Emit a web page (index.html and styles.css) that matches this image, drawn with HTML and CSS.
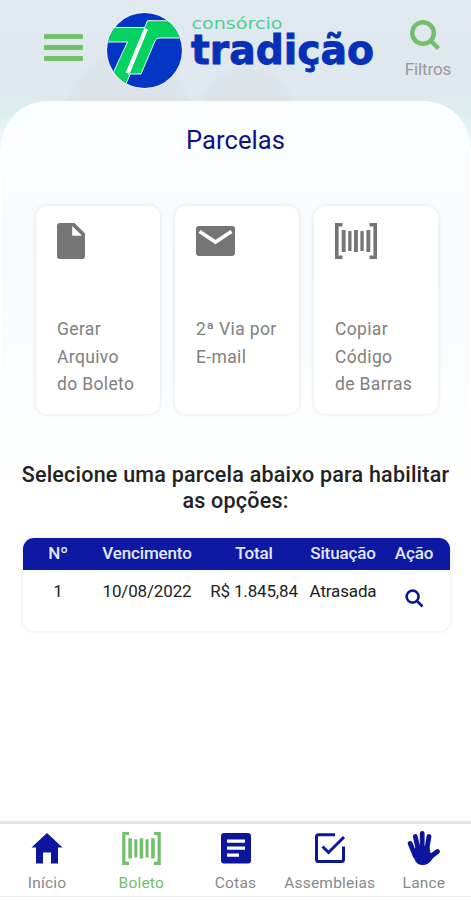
FILE: index.html
```
<!DOCTYPE html>
<html lang="pt-BR">
<head>
  <meta charset="UTF-8">
  <meta name="viewport" content="width=device-width, initial-scale=1.0">
  <title>Parcelas</title>
  <link rel="stylesheet" href="styles.css">
</head>
<body>
  <svg width="0" height="0" class="defs">
    <symbol id="barcode" viewBox="0 0 42 36">
      <path d="M0 0h7.5v3.4H3.6v29.2h3.9V36H0zM42 0h-7.5v3.4h3.9v29.2h-3.9V36H42z"/>
      <path d="M6.7 7h3.9v22H6.7zM13.2 8h3.300v20h-3.300zM19 7h3.9v22H19zM25.400 8h3.300v20h-3.300zM31.400 7h3.9v22H31.400z"/>
    </symbol>
  </svg>

  <header>
    <button class="menu"><span></span><span></span><span></span></button>
    <svg class="logo" width="272" height="84" viewBox="105 8 272 84">
      <defs>
        <clipPath id="circle"><circle cx="144.5" cy="50.5" r="37.5"/></clipPath>
      </defs>
      <circle cx="144.5" cy="50.5" r="38.5" fill="#eef4fa"/>
      <g clip-path="url(#circle)">
        <rect x="105" y="10" width="80" height="80" fill="#0435c5"/>
        <path d="M100 27.500H147L130.500 73.500L124 88L108 84L127.500 42H100Z" fill="#06d35f" stroke="#e8f7f4" stroke-width="1"/>
        <path d="M147.500 20.700H190V38H160C157 38 156 39 155 41L141 74H128L147 29H144Z" fill="#06d35f" stroke="#e8f7f4" stroke-width="1"/>
        <path d="M143.500 29.500H148L130 73H125.500Z" fill="#fff"/>
      </g>
      <text class="logo-top" x="191.500" y="29" textLength="91" lengthAdjust="spacingAndGlyphs">consórcio</text>
      <text class="logo-name" x="191" y="64" textLength="183" lengthAdjust="spacingAndGlyphs">tradição</text>
    </svg>
    <div class="filtros">
      <svg width="31" height="31" viewBox="0 0 31 31"><circle cx="13" cy="13" r="10.800"/><path d="M20.500 20.500L28.500 28.500"/></svg>
      <span>Filtros</span>
    </div>
  </header>

  <main>
    <h1>Parcelas</h1>

    <div class="cards">
      <div class="card">
        <svg width="28" height="36" viewBox="0 0 28 36"><path fill-rule="evenodd" d="M3 0H17.500L28 10.500V33a3 3 0 0 1-3 3H3a3 3 0 0 1-3-3V3a3 3 0 0 1 3-3zM15.200 3V12.800H25z"/></svg>
        <p>Gerar<br>Arquivo<br>do Boleto</p>
      </div>
      <div class="card">
        <svg width="39" height="36" viewBox="0 0 39 36"><path d="M3 3H36a3 3 0 0 1 3 3V30a3 3 0 0 1-3 3H3a3 3 0 0 1-3-3V6a3 3 0 0 1 3-3z"/><path class="flap" d="M3.500 8.500L19.500 19L35.500 8.500"/></svg>
        <p>2ª Via por<br>E-mail</p>
      </div>
      <div class="card">
        <svg width="42" height="36"><use href="#barcode"/></svg>
        <p>Copiar<br>Código<br>de Barras</p>
      </div>
    </div>

    <h2>Selecione uma parcela abaixo para habilitar<br>as opções:</h2>

    <div class="tabela">
      <div class="linha cabecalho">
        <span>Nº</span><span>Vencimento</span><span>Total</span><span>Situação</span><span>Ação</span>
      </div>
      <div class="linha">
        <span>1</span><span>10/08/2022</span><span>R$ 1.845,84</span><span>Atrasada</span>
        <span><svg class="lupa" width="19" height="19" viewBox="0 0 19 19"><circle cx="7.600" cy="7.600" r="6"/><path d="M12 12L17.500 17.500"/></svg></span>
      </div>
    </div>
  </main>

  <nav>
    <a>
      <svg width="34" height="36" viewBox="0 0 34 36"><path d="M17 4L32.500 18.500H28V34.500H21V23.500H13V34.500H6V18.500H1.500Z"/></svg>
      Início
    </a>
    <a class="ativo">
      <svg width="39" height="36" viewBox="0 -3 42 39"><use href="#barcode" width="42" height="36"/></svg>
      Boleto
    </a>
    <a>
      <svg width="34" height="36" viewBox="0 0 34 36"><path fill-rule="evenodd" d="M5 4H29a3 3 0 0 1 3 3V31.500a3 3 0 0 1-3 3H5a3 3 0 0 1-3-3V7a3 3 0 0 1 3-3zM8 10.500V13.700H26V10.500zM8 17.500V20.700H26V17.500zM8 24.500V27.700H20V24.500z"/></svg>
      Cotas
    </a>
    <a>
      <svg class="traco" width="34" height="36" viewBox="0 0 34 36"><path d="M22 5.700H5.500a2 2 0 0 0-2 2V30.500a2 2 0 0 0 2 2H28.500a2 2 0 0 0 2-2V17.500"/><path d="M9.500 17.500L15.500 23.500L31 8"/></svg>
      Assembleias
    </a>
    <a>
      <svg class="mao" width="34" height="36" viewBox="0 0 34 36"><path d="M5.500 22L10 17H22L23.500 24L29 23.500C26 28 24 36 15.500 36C8.500 36 7 30 5.500 22Z"/><path class="dedos" d="M3.200 14.500L8.300 27M8.300 7.500L11.500 22M15.200 4.500V22M22 7.500L19.500 22M30.500 22.500L22.500 28.500"/></svg>
      Lance
    </a>
  </nav>
</body>
</html>
```
FILE: styles.css
```
* {
  box-sizing: border-box;
}

body {
  display: flex;
  flex-direction: column;
  height: 900px;
  margin: 0;
  font-family: Roboto, Arial, sans-serif;
  background-color: #fff;
  color: #222;
  overflow: hidden;
}

.defs {
  position: absolute;
}

/* topo */
header {
  display: flex;
  align-items: flex-start;
  height: 150px;
  margin-bottom: -49px;
  padding: 8px 18px 0 44px;
  background:
    radial-gradient(circle at 128px 116px, #dce4e9 58px, transparent 66px),
    radial-gradient(circle at 247px 118px, #dce4e9 46px, transparent 54px),
    linear-gradient(#e2e9f0 0%, #dfe8ee 55%, #dcedee 75%, #f4fafb 100%);
}

.menu {
  display: flex;
  flex-direction: column;
  gap: 6.500px;
  width: 39px;
  margin: 26px 22px 0 0;
  padding: 0;
  border: 0;
  background: none;
}

.menu span {
  height: 4.500px;
  border-radius: 1px;
  background-color: #72bf6c;
}

.logo {
  overflow: visible;
}

.logo-top {
  font-family: "DejaVu Sans", sans-serif;
  font-size: 16.500px;
  fill: #4fce94;
}

.logo-name {
  font-family: "DejaVu Sans", sans-serif;
  font-weight: bold;
  font-size: 40px;
  fill: #0730b8;
  stroke: #0730b8;
  stroke-width: 0.900;
}

.filtros {
  display: flex;
  flex-direction: column;
  align-items: center;
  width: 50px;
  margin: 12px 0 0 26px;
  font-size: 17px;
  letter-spacing: -0.100px;
  line-height: 20px;
  color: #999;
}

.filtros svg {
  margin: 0 5px 8px 0;
  fill: none;
  stroke: #72bf6c;
  stroke-width: 4.500;
}

/* painel */
main {
  flex: 1;
  margin: 0 1px;
  border-radius: 46px 46px 0 0;
  background: linear-gradient(#fcfeff 0, #f9fcfe 130px, #fafdfe 260px, #fff 390px);
}

h1 {
  margin: 24px 0 51px;
  font-size: 25.500px;
  font-weight: normal;
  line-height: 30px;
  letter-spacing: 0.100px;
  text-align: center;
  color: #10108a;
}

.cards {
  display: flex;
  gap: 15px;
  padding-left: 35px;
}

.card {
  width: 124px;
  height: 208px;
  padding: 17px 0 0 21px;
  border-radius: 11px;
  background-color: #fff;
  box-shadow: 0 0 4px rgba(0, 0, 0, 0.110);
  color: #808080;
}

.card svg {
  display: block;
  fill: #757575;
}

.card .flap {
  fill: none;
  stroke: #fff;
  stroke-width: 3.600;
}

.card p {
  margin: 57px 0 0;
  font-size: 17.500px;
  line-height: 27.500px;
  letter-spacing: 0.350px;
  white-space: nowrap;
}

h2 {
  margin: 48px 0 24px;
  font-size: 21.500px;
  font-weight: 500;
  line-height: 26px;
  letter-spacing: 0.220px;
  text-align: center;
  white-space: nowrap;
}

.tabela {
  width: 427px;
  height: 93px;
  margin-left: 22px;
  border-radius: 11px;
  overflow: hidden;
  box-shadow: 0 0 4px rgba(0, 0, 0, 0.110);
  background-color: #fff;
}

.linha {
  display: grid;
  grid-template-columns: 70px 108px 106px 72px 70px;
  padding-top: 10px;
  font-size: 17px;
  line-height: 22px;
  letter-spacing: -0.150px;
  text-align: center;
  white-space: nowrap;
}

.cabecalho {
  height: 32px;
  padding-top: 4px;
  font-weight: 500;
  background-color: #0d18a3;
  color: #e4e8ff;
}

.lupa {
  display: block;
  margin: 9px auto 0;
  fill: none;
  stroke: #10189a;
  stroke-width: 2.600;
}

/* menu inferior */
nav {
  display: flex;
  height: 76px;
  padding-top: 8px;
  border-top: 3px solid #e3e3e3;
  border-bottom: 1px solid #eee;
  margin-bottom: 3px;
  background-color: #fff;
}

nav a {
  display: flex;
  flex: 1 0 0;
  flex-direction: column;
  align-items: center;
  min-width: 0;
  font-size: 15.500px;
  line-height: 18px;
  letter-spacing: 0.200px;
  color: #888;
}

nav svg {
  margin: -3px 0 9px;
  fill: #0b169c;
}

nav .ativo {
  color: #72bf6c;
}

nav .ativo svg {
  fill: #72bf6c;
}

nav .traco {
  fill: none;
  stroke: #0b169c;
  stroke-width: 3;
}

nav .dedos {
  fill: none;
  stroke: #0b169c;
  stroke-width: 4.800;
  stroke-linecap: round;
}
```
